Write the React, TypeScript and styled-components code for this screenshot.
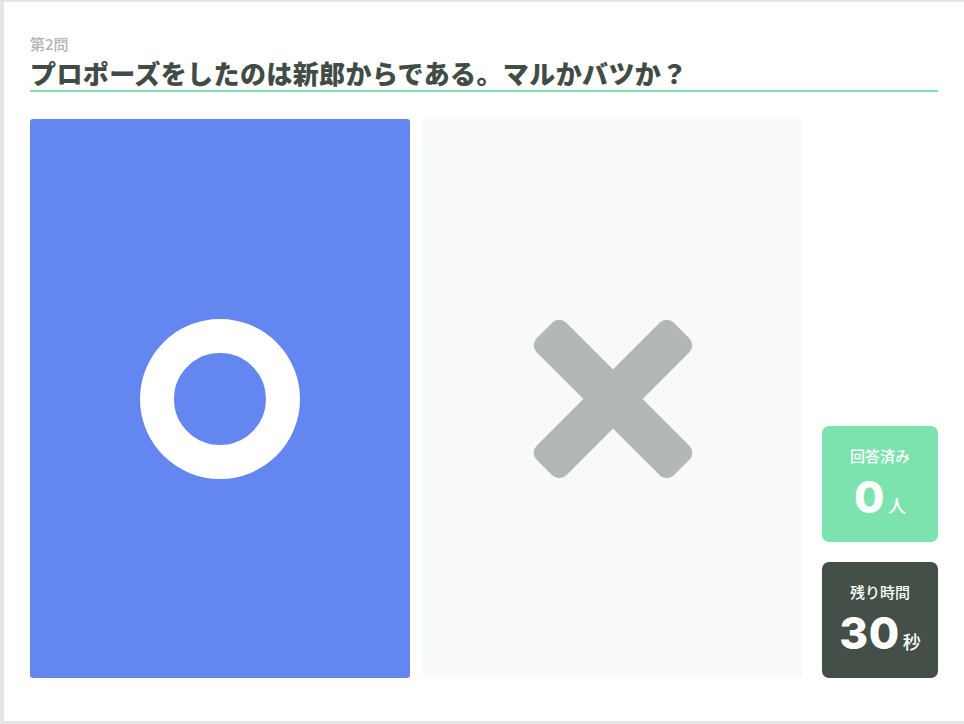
import React from "react";
import styled, { createGlobalStyle } from "styled-components";

const Global = createGlobalStyle`
  html, body { margin: 0; padding: 0; }
  body {
    background: #e4e5e4;
    font-family: "Noto Sans CJK JP", "Noto Sans", sans-serif;
  }
`;

const Card = styled.div`
  box-sizing: border-box;
  margin: 2px 0 0 4px;
  width: 960px;
  height: 719px;
  background: #ffffff;
  padding: 34px 26px 43px 26px;
  display: flex;
  flex-direction: column;
`;

const Label = styled.div`
  font-size: 15px;
  line-height: 16px;
  color: #b2b5b3;
  font-weight: 500;
`;

const Title = styled.h1`
  margin: 5px 0 0 0;
  font-size: 26px;
  line-height: 32px;
  font-weight: 900;
  letter-spacing: 0.4px;
  color: #404c45;
  padding-bottom: 1px;
  border-bottom: 2px solid #7de3ae;
`;

const Main = styled.div`
  margin-top: 27px;
  flex: 1;
  display: flex;
  min-height: 0;
`;

const Choice = styled.div<{ $bg: string }>`
  width: ${(p) => (p.$bg === "blue" ? 380 : 379)}px;
  margin-right: ${(p) => (p.$bg === "blue" ? 13 : 20)}px;
  border-radius: 3px;
  background: ${(p) => (p.$bg === "blue" ? "#6386f0" : "#f8f9f9")};
  display: flex;
  align-items: center;
  justify-content: center;
`;

const Side = styled.div`
  flex: 1;
  display: flex;
  flex-direction: column;
  justify-content: flex-end;
  gap: 20px;
`;

const Stat = styled.div<{ $dark?: boolean }>`
  height: 116px;
  border-radius: 7px;
  background: ${(p) => (p.$dark ? "#434f47" : "#7de3ae")};
  color: #ffffff;
  display: flex;
  flex-direction: column;
  align-items: center;
  justify-content: center;
`;

const StatLabel = styled.div`
  font-size: 15px;
  line-height: 18px;
  font-weight: 500;
  margin-top: 0px;
`;

const StatValue = styled.div`
  display: flex;
  align-items: baseline;
  margin-top: 8px;
`;

const Num = styled.span`
  font-family: Inter, "Liberation Sans", Arial, sans-serif;
  font-weight: 800;
  font-size: 44px;
  line-height: 48px;
  letter-spacing: 0.5px;
`;

const Unit = styled.span`
  font-size: 18px;
  font-weight: 500;
  margin-left: 3px;
`;

export default function App() {
  return (
    <>
      <Global />
      <Card>
        <Label>第2問</Label>
        <Title>プロポーズをしたのは新郎からである。マルかバツか？</Title>
        <Main>
          <Choice $bg="blue">
            <svg width="160" height="160" viewBox="-80 -80 160 160">
              <circle cx="0" cy="0" r="63" fill="none" stroke="#ffffff" strokeWidth="34" />
            </svg>
          </Choice>
          <Choice $bg="grey">
            <svg width="160" height="160" viewBox="-80 -80 160 160">
              <g fill="#b4b8b5">
                <rect x="-97" y="-21" width="194" height="42" rx="10" transform="rotate(45)" />
                <rect x="-97" y="-21" width="194" height="42" rx="10" transform="rotate(-45)" />
              </g>
            </svg>
          </Choice>
          <Side>
            <Stat>
              <StatLabel>回答済み</StatLabel>
              <StatValue>
                <Num>0</Num>
                <Unit>人</Unit>
              </StatValue>
            </Stat>
            <Stat $dark>
              <StatLabel>残り時間</StatLabel>
              <StatValue>
                <Num>30</Num>
                <Unit>秒</Unit>
              </StatValue>
            </Stat>
          </Side>
        </Main>
      </Card>
    </>
  );
}
